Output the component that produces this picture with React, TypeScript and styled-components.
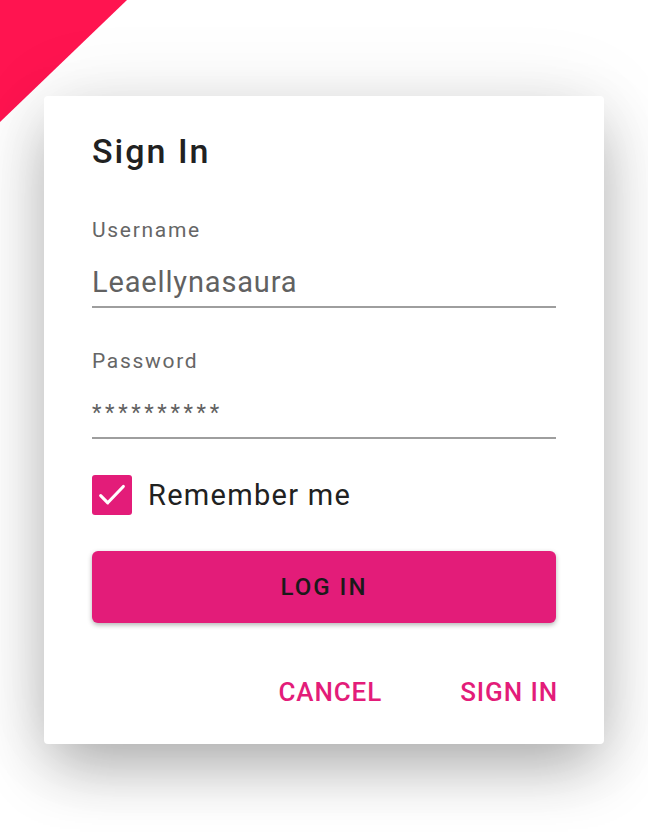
import React from "react";
import styled, { createGlobalStyle } from "styled-components";

const GlobalStyle = createGlobalStyle`
  html, body { margin: 0; padding: 0; background: #ffffff; }
  body { font-family: Roboto, "Noto Sans", sans-serif; -webkit-font-smoothing: antialiased; }
  * { box-sizing: border-box; }
`;

const Page = styled.div`
  position: relative;
  width: 648px;
  height: 840px;
  overflow: hidden;
  padding: 96px 0 0 44px;
  background: #ffffff;
`;

const Corner = styled.div`
  position: absolute;
  top: 0;
  left: 0;
  width: 127px;
  height: 122px;
  background: #ff1450;
  clip-path: polygon(0 0, 100% 0, 0 100%);
`;

const Card = styled.div`
  position: relative;
  width: 560px;
  height: 648px;
  background: #ffffff;
  border-radius: 4px;
  box-shadow: 0 26px 60px -6px rgba(0, 0, 0, 0.32), 0 0 90px rgba(0, 0, 0, 0.07);
  padding: 33px 48px 0 48px;
  display: flex;
  flex-direction: column;
`;

const Title = styled.h1`
  margin: 0;
  font-size: 34px;
  line-height: 44px;
  font-weight: 500;
  letter-spacing: 2px;
  color: #212121;
`;

const Field = styled.div<{ $top: number }>`
  margin-top: ${(p) => p.$top}px;
  display: flex;
  flex-direction: column;
`;

const Label = styled.div`
  font-size: 21px;
  line-height: 24px;
  letter-spacing: 1.7px;
  color: #666666;
`;

const Value = styled.div<{ $masked?: boolean }>`
  margin-top: 22px;
  font-size: ${(p) => (p.$masked ? "22px" : "29px")};
  line-height: 36px;
  letter-spacing: ${(p) => (p.$masked ? "3.6px" : "0.85px")};
  color: #616161;
  padding-bottom: 6px;
  border-bottom: 2px solid #9e9e9e;
`;

const CheckRow = styled.label`
  margin-top: 36px;
  display: flex;
  align-items: center;
  gap: 16px;
  cursor: pointer;
`;

const Box = styled.span`
  width: 40px;
  height: 40px;
  border-radius: 3px;
  background: #e31c79;
  display: flex;
  align-items: center;
  justify-content: center;
`;

const CheckText = styled.span`
  font-size: 29px;
  line-height: 40px;
  letter-spacing: 1.3px;
  color: #212121;
`;

const PrimaryButton = styled.button`
  margin-top: 36px;
  height: 72px;
  width: 100%;
  border: none;
  border-radius: 6px;
  background: #e31c79;
  box-shadow: 0 2px 5px rgba(0, 0, 0, 0.3);
  font-family: inherit;
  font-size: 24px;
  font-weight: 500;
  letter-spacing: 2px;
  color: #1a1a1a;
  cursor: pointer;
`;

const Actions = styled.div`
  margin-top: 49px;
  display: flex;
  justify-content: flex-end;
  gap: 78px;
  margin-right: -2px;
`;

const TextButton = styled.button`
  padding: 0;
  border: none;
  background: none;
  font-family: inherit;
  font-size: 26px;
  line-height: 40px;
  font-weight: 500;
  letter-spacing: 0.9px;
  color: #e31c79;
  cursor: pointer;
`;

export default function App() {
  return (
    <>
      <GlobalStyle />
      <Page>
        <Corner />
        <Card>
          <Title>Sign In</Title>
          <Field $top={45}>
            <Label>Username</Label>
            <Value>Leaellynasaura</Value>
          </Field>
          <Field $top={41}>
            <Label>Password</Label>
            <Value $masked>**********</Value>
          </Field>
          <CheckRow>
            <Box>
              <svg width="34" height="34" viewBox="0 0 24 24" fill="none">
                <path d="M4 12.5l5 5L20 6" stroke="#ffffff" strokeWidth="2.2" strokeLinecap="round" strokeLinejoin="round" />
              </svg>
            </Box>
            <CheckText>Remember me</CheckText>
          </CheckRow>
          <PrimaryButton>LOG IN</PrimaryButton>
          <Actions>
            <TextButton>CANCEL</TextButton>
            <TextButton>SIGN IN</TextButton>
          </Actions>
        </Card>
      </Page>
    </>
  );
}
